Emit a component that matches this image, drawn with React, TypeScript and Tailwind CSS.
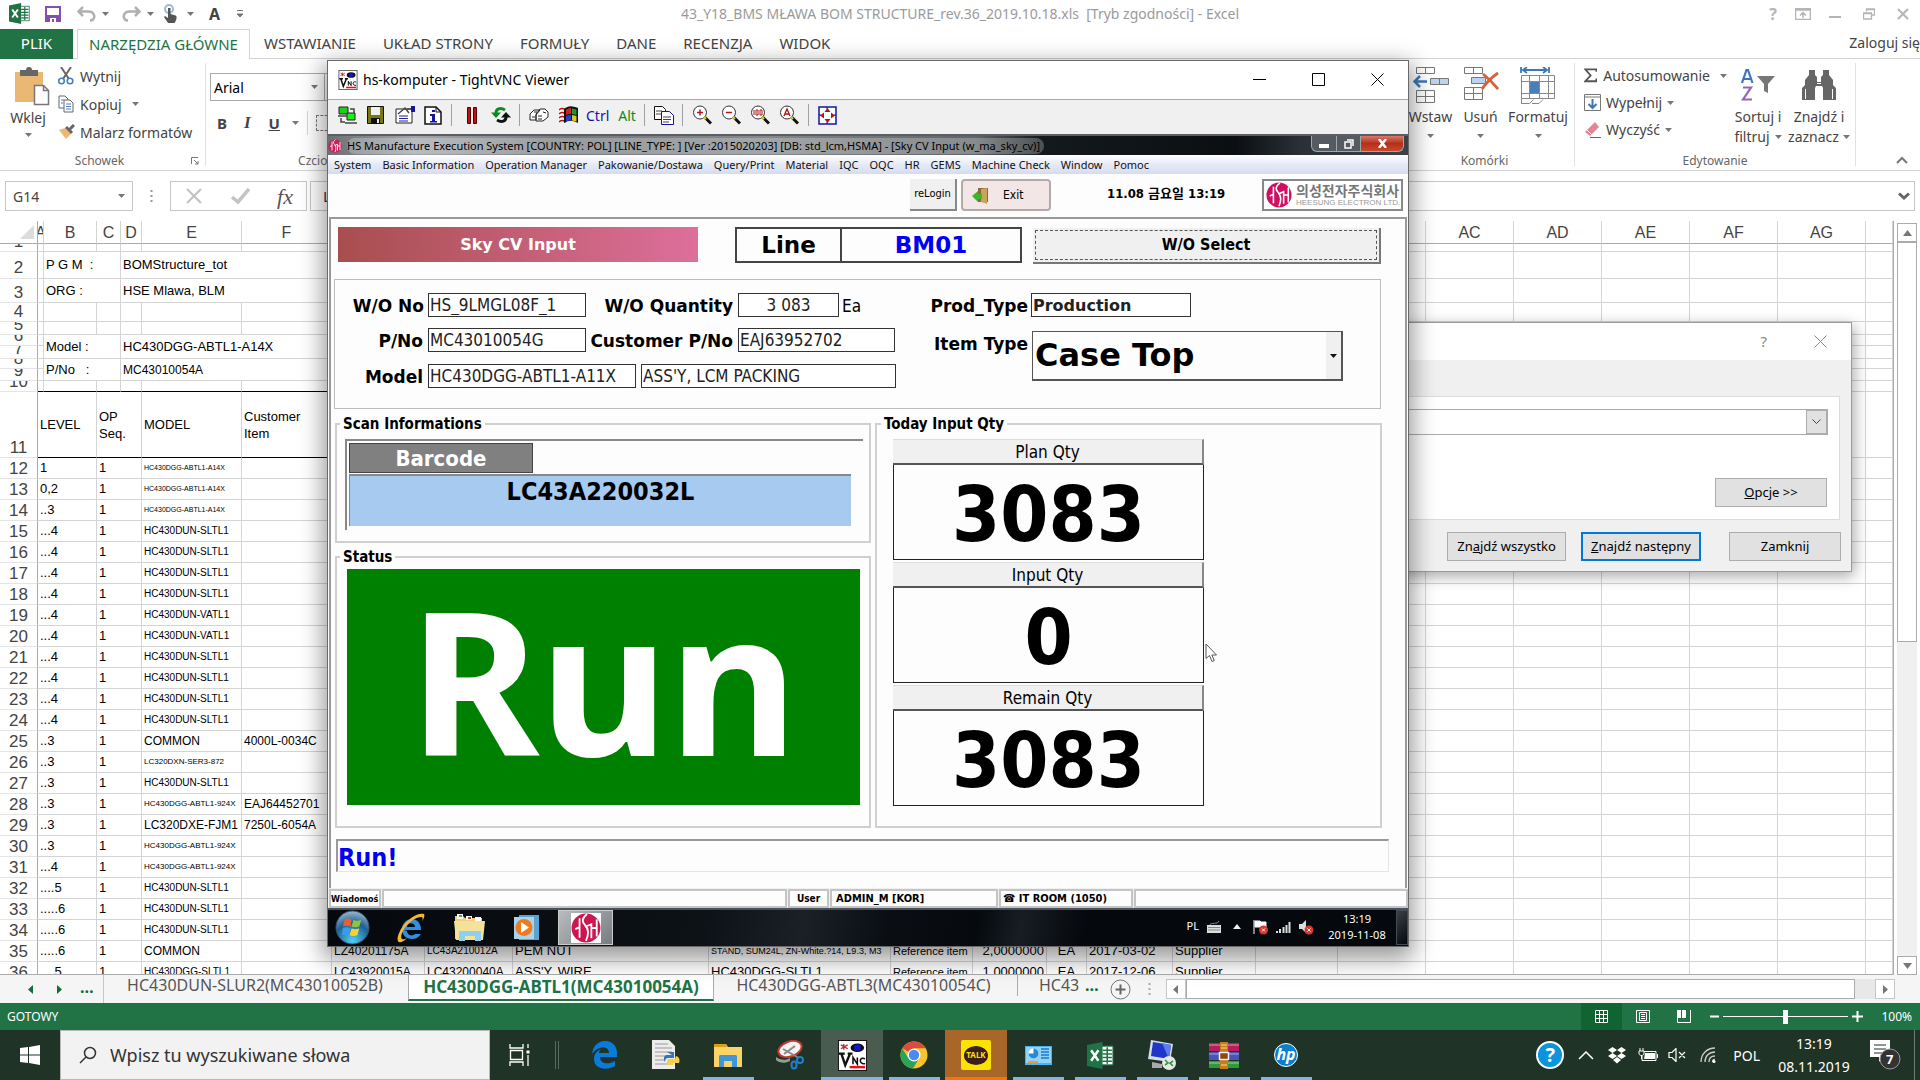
import React from "react";

const UI = "font-['Noto_Sans','Open_Sans',sans-serif]";
const TAHOMA = "font-['DejaVu_Sans_Condensed','DejaVu_Sans',sans-serif]";
const WIDE = "font-['DejaVu_Sans',sans-serif]";
const ARIAL = "font-['Liberation_Sans',Arial,sans-serif]";

/* ---------- small shared drawings ---------- */

function Caret({ className = "" }: { className?: string }) {
  return (
    <svg className={"shrink-0 " + className} width="7" height="4" viewBox="0 0 7 4">
      <path d="M0 0h7L3.5 4z" fill="#777" />
    </svg>
  );
}

function HsLogo({ size, color }: { size: number; color: string }) {
  return (
    <svg width={size} height={size} viewBox="0 0 28 28" className="shrink-0">
      <circle cx="14" cy="14" r="13.5" fill={color} />
      <path
        d="M8 5v18M4 15l4.500-2M15 1c-5 4-5 7-2 10s4 8 1 15M13 13l6-2.500v13M24 6v16M19 14h5"
        stroke="#fff"
        strokeWidth="1.7"
        fill="none"
      />
    </svg>
  );
}

function VncLogo({ size }: { size: number }) {
  return (
    <svg width={size} height={size} viewBox="0 0 30 32" className="shrink-0">
      <rect x=".5" y=".5" width="29" height="31" fill="#fff" stroke="#111" />
      <path d="M3 5l7 4M3 9l7-4M6 4v6" stroke="#b03030" strokeWidth="1.4" />
      <ellipse cx="20" cy="8" rx="7" ry="4.5" fill="#111" />
      <circle cx="20" cy="8" r="3.4" fill="#1414e0" />
      <path d="M1 14h6M3.500 14l4 12 5-12M10 14h5" stroke="#111" strokeWidth="2.4" fill="none" />
      <path d="M15.500 25v-7l4.500 7v-7M28 19.500c-5-3-7 4-2 5h2" stroke="#111" strokeWidth="1.600" fill="none" />
      <path d="M12 28h16" stroke="#f01010" strokeWidth="2.500" />
    </svg>
  );
}

/* ---------- Excel title, tabs, ribbon ---------- */

function ExcelMark({ size }: { size: number }) {
  return (
    <svg width={size} height={size} viewBox="0 0 26 26" className="shrink-0">
      <rect x="13" y="4" width="12" height="18" fill="#fff" stroke="#217346" />
      <path d="M15 8h9M15 11.500h9M15 15h9M15 18.500h9M19.500 5v16" stroke="#217346" strokeWidth="1.500" />
      <path d="M0 3l15-3v26L0 23z" fill="#217346" />
      <path d="M4 8l7 10M11 8L4 18" stroke="#fff" strokeWidth="2.400" />
    </svg>
  );
}

function TitleBar() {
  return (
    <header className="relative flex h-[29px] shrink-0 items-center pb-[2px] pl-[9px] pr-2">
      <ExcelMark size={21} />
      <svg className="ml-[15px]" width="16" height="16" viewBox="0 0 16 16">
        <path d="M1 1h14v14H1z" fill="#fff" stroke="#8450b0" strokeWidth="2" />
        <path d="M0 9h16v7H0z" fill="#8450b0" />
        <path d="M5 12h6v4H5z" fill="#fff" />
        <path d="M7 13h2v3H7z" fill="#8450b0" />
      </svg>
      <svg className="ml-4" width="19" height="16" viewBox="0 0 19 16">
        <path d="M6 1L1.500 5.500 6 10M2 5.500h9c8 0 8 9 2 9" fill="none" stroke="#b0b0b0" strokeWidth="2.500" />
      </svg>
      <Caret className="ml-[6px]" />
      <svg className="ml-[13px]" width="19" height="16" viewBox="0 0 19 16">
        <path d="M13 1l4.500 4.500L13 10M17 5.500H8c-8 0-8 9-2 9" fill="none" stroke="#b0b0b0" strokeWidth="2.500" />
      </svg>
      <Caret className="ml-[6px]" />
      <svg className="ml-[9px]" width="16" height="19" viewBox="0 0 16 19">
        <circle cx="6" cy="5" r="4" fill="none" stroke="#9db9d8" strokeWidth="2" />
        <path d="M5 4h2.500v6l5 1.500c2 .5 1 5-1 7.500H5l-4-6 1-1 3 2z" fill="#555" />
      </svg>
      <Caret className="ml-2" />
      <span className={"ml-[15px] text-[16px] font-bold text-[#444] " + UI}>A</span>
      <svg className="ml-[17px]" width="6" height="8" viewBox="0 0 6 8">
        <path d="M0 .5h6M0 4h6L3 7z" stroke="#777" fill="#777" />
      </svg>
      <h1 className="absolute left-1/2 -translate-x-1/2 whitespace-nowrap text-[14px] text-[#9a9a9a]">
        43_Y18_BMS MŁAWA BOM STRUCTURE_rev.36_2019.10.18.xls&nbsp; [Tryb zgodności] - Excel
      </h1>
      <div className="ml-auto flex items-center gap-[18px] pr-[3px] text-[#b5b5b5]">
        <span className="text-[16px] font-bold">?</span>
        <svg width="16" height="12" viewBox="0 0 16 12">
          <path d="M.5.500h15v11H.5zM0 2h16M8 10V5M5 7.500L8 4.500l3 3" fill="none" stroke="#b5b5b5" strokeWidth="1.500" />
        </svg>
        <svg width="12" height="12" viewBox="0 0 12 12"><path d="M0 9h12" stroke="#b5b5b5" strokeWidth="2" /></svg>
        <svg className="ml-1" width="12" height="12" viewBox="0 0 12 12">
          <path d="M3.500 3.500V1h8v6H9M.5 5h8v6H.5zM.5 5.500h8M3.500 1.500h8" fill="none" stroke="#b5b5b5" strokeWidth="1.300" />
        </svg>
        <svg className="ml-1" width="12" height="12" viewBox="0 0 12 12"><path d="M1 1l10 10M11 1L1 11" stroke="#b5b5b5" strokeWidth="2" /></svg>
      </div>
    </header>
  );
}

function RibbonTabs() {
  const tabs = ["WSTAWIANIE", "UKŁAD STRONY", "FORMUŁY", "DANE", "RECENZJA", "WIDOK"];
  return (
    <nav className="flex h-[30px] shrink-0 text-[15px] leading-[26px] text-[#444]">
      <button className="w-[73px] bg-[#217346] pb-[2px] text-white">PLIK</button>
      <div className="w-1 border-b border-[#d4d4d4]" />
      <button className="w-[173px] whitespace-nowrap border border-b-0 border-[#d4d4d4] pb-[2px] text-[#217346]">NARZĘDZIA GŁÓWNE</button>
      <div className="flex flex-1 gap-[27px] whitespace-nowrap border-b border-[#d4d4d4] pb-[2px] pl-[14px]">
        {tabs.map((t) => (
          <button key={t}>{t}</button>
        ))}
        <button className="ml-auto text-[14px]">Zaloguj się</button>
      </div>
    </nav>
  );
}

function Ribbon() {
  return (
    <section className="flex h-28 shrink-0 border-b border-[#d4d4d4] py-1 text-[14px] text-[#444]">
      <div className="flex w-[206px] shrink-0 flex-col border-r border-[#e1e1e1]">
        <div className="flex flex-1">
          <button className="flex w-[56px] flex-col items-center pt-1">
            <svg className="ml-2" width="36" height="39" viewBox="0 0 36 39">
              <path d="M1 5h28v30H1z" fill="#e9b973" />
              <path d="M6 3h6a3 3 0 0 1 6 0h6v6H6z" fill="#666" />
              <path d="M20.500 18.500h9l5 5v14h-14z" fill="#fff" stroke="#777" strokeWidth="1.500" />
              <path d="M29.500 18.500v5h5" fill="none" stroke="#777" strokeWidth="1.500" />
            </svg>
            <span className="mt-px leading-[22px]">Wklej</span>
            <Caret className="mt-1" />
          </button>
          <div className="-mt-px flex flex-col pl-[2px]">
            <button className="flex h-7 items-center gap-[6px]">
              <svg width="16" height="18" viewBox="0 0 16 18">
                <path d="M3 0l8 12M13 0L5 12" stroke="#666" strokeWidth="2" />
                <circle cx="3.500" cy="14" r="2.800" fill="#fff" stroke="#4a7ebb" strokeWidth="1.600" />
                <circle cx="12" cy="14" r="2.800" fill="#fff" stroke="#4a7ebb" strokeWidth="1.600" />
              </svg>
              Wytnij
            </button>
            <button className="flex h-7 items-center gap-[6px]">
              <svg width="16" height="18" viewBox="0 0 16 18">
                <path d="M1 1h6l3 3v9H1z" fill="#fff" stroke="#666" />
                <path d="M6 5h6l3 3v9H6z" fill="#fff" stroke="#666" />
                <path d="M8 9h5M8 11.500h5M8 14h5M3 5h3M3 8h2" stroke="#4a7ebb" />
              </svg>
              Kopiuj
              <Caret className="ml-1" />
            </button>
            <button className="flex h-7 items-center gap-[5px] whitespace-nowrap">
              <svg width="17" height="16" viewBox="0 0 17 16">
                <path d="M1 6l6-2 6 6-5 5z" fill="#e9b973" />
                <path d="M8 3l6 6M12 5l4-4" stroke="#666" strokeWidth="3" />
              </svg>
              Malarz formatów
            </button>
          </div>
        </div>
        <div className="mb-[-3px] flex h-4 items-center justify-center text-[12px] text-[#666]">
          <span className="ml-auto pl-2">Schowek</span>
          <svg className="ml-auto mr-[6px]" width="8" height="8" viewBox="0 0 8 8">
            <path d="M.5 7V.5H7M3 3l4 4M7 4v3H4" fill="none" stroke="#777" />
          </svg>
        </div>
      </div>
      <div className="flex w-[230px] shrink-0 flex-col pl-1 pt-[10px]">
        <div className="flex">
          <div className="flex h-7 w-[115px] items-center justify-between border border-[#ababab] px-[3px] text-[14px] text-black">
            Arial <Caret className="mr-[3px]" />
          </div>
          <div className="h-7 w-12 border border-l-0 border-[#ababab]" />
        </div>
        <div className="flex h-11 items-center pl-[7px] text-[15px]">
          <b>B</b>
          <i className="ml-[17px] font-['Liberation_Serif'] text-[17px] font-bold">I</i>
          <b className="ml-[18px] underline">U</b>
          <Caret className="ml-3" />
          <span className="ml-2 h-6 w-px bg-[#d4d4d4]" />
          <span className="ml-2 h-4 w-4 border border-dashed border-[#777]" />
        </div>
        <div className="-mb-[3px] mt-auto h-4 text-center text-[12px] leading-4 text-[#666]">Czcionka</div>
      </div>
      <div className="ml-auto flex w-[180px] shrink-0 flex-col border-r border-[#e1e1e1]">
        <div className="flex flex-1 pl-2">
          <button className="flex w-[55px] flex-col items-center pt-1">
            <svg width="36" height="36" viewBox="0 0 36 36">
              <path d="M3.500.500h18v6h-18zM12.500.500v6M3.500 23.500h18v12h-18zM12.500 23.500v12M3.500 29.500h18" fill="#fff" stroke="#777" />
              <path d="M17.500 11.500h18v6h-18zM26.500 11.500v6" fill="#bdd3ec" stroke="#777" />
              <path d="M14 14.500H3M7 9l-5.500 5.500L7 20" fill="none" stroke="#3c78b8" strokeWidth="2.500" />
            </svg>
            <span className="mt-[3px] leading-[22px]">Wstaw</span>
            <Caret className="mt-[6px]" />
          </button>
          <button className="flex w-[45px] flex-col items-center pt-1">
            <svg width="36" height="36" viewBox="0 0 36 36">
              <path d="M1.500.500h18v6h-18zM10.500.500v6M1.500 20.500h18v12h-18zM10.500 20.500v12M1.500 26.500h18" fill="#fff" stroke="#777" />
              <path d="M8.500 10.500h14v6h-14z" fill="#bdd3ec" stroke="#777" />
              <path d="M20 7c5 4 10 9 15 15M35 6C29 10 23 16 19 22" stroke="#d9603b" strokeWidth="2.800" fill="none" />
            </svg>
            <span className="mt-[3px] leading-[22px]">Usuń</span>
            <Caret className="mt-[6px]" />
          </button>
          <button className="flex w-[70px] flex-col items-center pt-1">
            <svg width="36" height="37" viewBox="0 0 36 37">
              <path d="M1 0v6M29 0v6M4 3h22M7 0L3 3l4 3M23 0l4 3-4 3" fill="none" stroke="#3c78b8" strokeWidth="1.800" />
              <path d="M1.500 8.500h33v23h-33zM1.500 14.500h33M1.500 26.500h33M9.500 8.500v23M19.500 8.500v23M28.500 8.500v23" fill="#fff" stroke="#888" />
              <path d="M10 15h9v11h-9z" fill="#4a7ebb" />
              <path d="M1.500 31.500v5h8l4-4M12 36.500h7l4-4" fill="none" stroke="#888" />
            </svg>
            <span className="mt-[2px] leading-[22px]">Formatuj</span>
            <Caret className="mt-[6px]" />
          </button>
        </div>
        <div className="-mb-[3px] h-4 text-center text-[12px] leading-4 text-[#666]">Komórki</div>
      </div>
      <div className="flex w-[281px] shrink-0 flex-col border-r border-[#e1e1e1]">
        <div className="flex flex-1">
          <div className="-mt-px flex w-[152px] flex-col pl-[9px] text-[14px]">
            <button className="flex h-[27px] items-center gap-[6px]">
              <svg width="16" height="17" viewBox="0 0 16 17">
                <path d="M15 4V1H1.500L8 8.500 1.500 15.500H15V12" fill="none" stroke="#555" strokeWidth="2.200" />
              </svg>
              Autosumowanie <Caret className="ml-1" />
            </button>
            <button className="flex h-[27px] items-center gap-[5px]">
              <svg width="17" height="17" viewBox="0 0 17 17">
                <path d="M.5.500h16v16H.5zM.5 3h16" fill="#fff" stroke="#777" />
                <path d="M8.500 5v9M4.500 10l4 4 4-4" fill="none" stroke="#3c78b8" strokeWidth="2" />
              </svg>
              Wypełnij <Caret />
            </button>
            <button className="flex h-[27px] items-center gap-[5px]">
              <svg width="17" height="17" viewBox="0 0 17 17">
                <path d="M1 11L11 1l4 5L6 15z" fill="#e58696" />
                <path d="M3 9l5 5" stroke="#fff" />
                <path d="M6 16.500h11" stroke="#666" />
              </svg>
              Wyczyść <Caret />
            </button>
          </div>
          <button className="flex w-[62px] flex-col items-center pt-[6px] leading-5">
            <svg width="34" height="32" viewBox="0 0 34 32">
              <path d="M1 14L5.500 1h1.500L11.500 14M3 10h7" fill="none" stroke="#3c78b8" strokeWidth="2.200" />
              <path d="M2 18.500h8L2 30.500h9" fill="none" stroke="#9364b5" strokeWidth="2.200" />
              <path d="M16 7h18l-7 8v9l-4-2v-7z" fill="#777" />
            </svg>
            <span className="mt-[6px] whitespace-nowrap">Sortuj i</span>
            <span className="flex items-center gap-[5px]">filtruj <Caret /></span>
          </button>
          <button className="flex w-[60px] flex-col items-center pt-[6px] leading-5">
            <svg width="34" height="32" viewBox="0 0 34 32">
              <path d="M0 31V19l3-3V11l4-5V1h6v5l2 2v5h4V8l2-2V1h6v5l4 5v5l3 3v12H21V19l-1-2h-6l-1 2v12z" fill="#666" />
              <path d="M3.500 20v10M30.500 20v10M15 14.500h4" stroke="#fff" />
            </svg>
            <span className="mt-[6px] whitespace-nowrap">Znajdź i</span>
            <span className="flex items-center gap-1">zaznacz <Caret /></span>
          </button>
        </div>
        <div className="-mb-[3px] h-4 text-center text-[12px] leading-4 text-[#666]">Edytowanie</div>
      </div>
      <div className="flex w-[64px] shrink-0 items-end justify-end pb-[2px] pr-3">
        <svg width="12" height="8" viewBox="0 0 12 8"><path d="M1 7l5-5 5 5" fill="none" stroke="#777" strokeWidth="2" /></svg>
      </div>
    </section>
  );
}

function FormulaBar() {
  return (
    <section className="flex h-[50px] shrink-0 items-start pl-[5px] pr-[5px] pt-[10px] text-[15px]">
      <div className="flex h-[30px] w-[128px] items-center justify-between border border-[#c6c6c6] px-[7px] text-[14px] text-[#444]">
        G14 <Caret />
      </div>
      <div className="flex h-[30px] w-[37px] items-center justify-center text-[#999]">
        <svg width="3" height="12" viewBox="0 0 3 12"><path d="M1.500 0v2M1.500 5v2M1.500 10v2" stroke="#999" strokeWidth="2" /></svg>
      </div>
      <div className="flex h-[30px] w-[137px] items-center justify-between border border-[#c6c6c6] pl-[14px] pr-[13px]">
        <svg width="18" height="16" viewBox="0 0 18 16"><path d="M2 1l14 14M16 1L2 15" stroke="#c4c4c4" strokeWidth="2.200" /></svg>
        <svg width="19" height="16" viewBox="0 0 19 16"><path d="M1 9l6 5L18 1" fill="none" stroke="#c4c4c4" strokeWidth="3.500" /></svg>
        <span className="font-['Liberation_Serif'] text-[22px] italic text-[#555]">fx</span>
      </div>
      <div className="ml-[3px] flex h-[30px] flex-1 items-center border border-[#c6c6c6] px-3">
        <input aria-label="Formula" className="min-w-0 flex-1 text-[#335]" defaultValue="L" />
        <svg className="-mr-2" width="12" height="8" viewBox="0 0 12 8"><path d="M1 1.500l5 4.500 5-4.500" fill="none" stroke="#666" strokeWidth="3" /></svg>
      </div>
    </section>
  );
}

/* ---------- worksheet ---------- */

const cellBase = "border-b border-r border-[#d4d4d4] p-0";
const filler = (n: number, black = false) =>
  Array.from({ length: n }, (_, i) => (
    <td key={"f" + i} className={black ? "border-b border-r border-b-black border-r-[#d4d4d4] p-0" : cellBase} />
  ));

function RowHead({ n, h }: { n: number; h: string }) {
  return (
    <th scope="row" className="border-b border-r border-b-[#e4e4e4] border-r-[#ababab] p-0 font-normal">
      <div className={"flex items-end justify-center overflow-hidden text-[17px] leading-[19px] text-[#444] " + h}>{n}</div>
    </th>
  );
}

function Txt({ children, size = "text-[13px]" }: { children: React.ReactNode; size?: string }) {
  return <div className={"overflow-hidden whitespace-pre pl-[2px] leading-4 " + size}>{children}</div>;
}

const S = "text-[7px]";
const M = "text-[10px]";
const L = "text-[12px]";
const bomRows: [string, string, string, string][] = [
  ["1", "HC430DGG-ABTL1-A14X", S, ""],
  ["0,2", "HC430DGG-ABTL1-A14X", S, ""],
  ["..3", "HC430DGG-ABTL1-A14X", S, ""],
  ["...4", "HC430DUN-SLTL1", M, ""],
  ["...4", "HC430DUN-SLTL1", M, ""],
  ["...4", "HC430DUN-SLTL1", M, ""],
  ["...4", "HC430DUN-SLTL1", M, ""],
  ["...4", "HC430DUN-VATL1", M, ""],
  ["...4", "HC430DUN-VATL1", M, ""],
  ["...4", "HC430DUN-SLTL1", M, ""],
  ["...4", "HC430DUN-SLTL1", M, ""],
  ["...4", "HC430DUN-SLTL1", M, ""],
  ["...4", "HC430DUN-SLTL1", M, ""],
  ["..3", "COMMON", L, "4000L-0034C"],
  ["..3", "LC320DXN-SER3-872", "text-[8px]", ""],
  ["..3", "HC430DUN-SLTL1", M, ""],
  ["..3", "HC430DGG-ABTL1-924X", "text-[8px]", "EAJ64452701"],
  ["..3", "LC320DXE-FJM1", L, "7250L-6054A"],
  ["..3", "HC430DGG-ABTL1-924X", "text-[8px]", ""],
  ["...4", "HC430DGG-ABTL1-924X", "text-[8px]", ""],
  ["....5", "HC430DUN-SLTL1", M, ""],
  [".....6", "HC430DUN-SLTL1", M, ""],
  [".....6", "HC430DUN-SLTL1", M, ""],
  [".....6", "COMMON", L, ""],
  ["....5", "HC430DGG-SLTL1", M, ""],
];

const partRows: Record<number, string[]> = {
  35: ["LZ40201175A", "LC43A210012A", "PEM NUT", "STAND, SUM24L, ZN-White.?14, L9.3, M3", "Reference item", "2,0000000", "EA", "2017-03-02", "Supplier"],
  36: ["LC43920015A", "LC43200040A", "ASS'Y, WIRE", "HC430DGG-SLTL1", "Reference item", "1,0000000", "EA", "2017-12-06", "Supplier"],
};

const columns: [string, string][] = [
  ["A", "w-[6px]"], ["B", "w-[53px]"], ["C", "w-[24px]"], ["D", "w-[21px]"], ["E", "w-[100px]"], ["F", "w-[90px]"],
  ["G", "w-[93px]"], ["H", "w-[88px]"], ["I", "w-[196px]"], ["J", "w-[182px]"], ["K", "w-[82px]"], ["L", "w-[74px]"],
  ["M", "w-[40px]"], ["N", "w-[86px]"], ["O", "w-[83px]"], ["P", "w-[82px]"], ["AB", "w-[88px]"], ["AC", "w-[88px]"],
  ["AD", "w-[88px]"], ["AE", "w-[88px]"], ["AF", "w-[88px]"], ["AG", "w-[88px]"], ["", ""],
];

function Sheet() {
  return (
    <table className={"w-full table-fixed border-separate border-spacing-0 text-left text-black " + ARIAL}>
      <colgroup>
        <col className="w-[38px]" />
        {columns.map(([n, w]) => (
          <col key={n} className={w} />
        ))}
      </colgroup>
      <thead>
        <tr className="h-[23px]">
          <th className="border-b border-r border-[#ababab] p-0">
            <svg className="ml-5" width="14" height="14" viewBox="0 0 14 14"><path d="M14 0v14H0z" fill="#dcdcdc" /></svg>
          </th>
          {columns.map(([n]) => (
            <th key={n} scope="col" className="border-b border-r border-b-[#ababab] border-r-[#d4d4d4] p-0 text-center font-normal text-[#444]">
              <div className="flex justify-center overflow-hidden pt-[2px] text-[16px] leading-5">{n}</div>
            </th>
          ))}
        </tr>
      </thead>
      <tbody>
        <tr className="h-2"><RowHead n={1} h="h-[7px]" />{filler(23)}</tr>
        <tr className="h-[27px]">
          <RowHead n={2} h="h-[23px]" />
          {filler(1)}
          <td className={cellBase} colSpan={2}><Txt>{"P G M  :"}</Txt></td>
          <td className={cellBase} colSpan={5}><Txt>BOMStructure_tot</Txt></td>
          {filler(15)}
        </tr>
        <tr className="h-6">
          <RowHead n={3} h="h-[22px]" />
          {filler(1)}
          <td className={cellBase} colSpan={2}><Txt>ORG :</Txt></td>
          <td className={cellBase} colSpan={5}><Txt>HSE Mlawa, BLM</Txt></td>
          {filler(15)}
        </tr>
        <tr className="h-[19px]"><RowHead n={4} h="h-[18px]" />{filler(23)}</tr>
        <tr className="h-[13px]"><RowHead n={5} h="h-3" />{filler(23)}</tr>
        <tr className="h-[11px]">
          <RowHead n={6} h="h-[10px]" />
          {filler(1)}
          <td className={cellBase} colSpan={2} rowSpan={2}><Txt>Model :</Txt></td>
          <td className={cellBase} colSpan={5} rowSpan={2}><Txt>HC430DGG-ABTL1-A14X</Txt></td>
          {filler(15)}
        </tr>
        <tr className="h-[13px]"><RowHead n={7} h="h-3" />{filler(16)}</tr>
        <tr className="h-[10px]">
          <RowHead n={8} h="h-[9px]" />
          {filler(1)}
          <td className={cellBase} colSpan={2} rowSpan={2}><Txt>{"P/No   :"}</Txt></td>
          <td className={cellBase} colSpan={5} rowSpan={2}><Txt size="text-[12px]">MC43010054A</Txt></td>
          {filler(15)}
        </tr>
        <tr className="h-3"><RowHead n={9} h="h-[11px]" />{filler(16)}</tr>
        <tr className="h-[11px]">
          <RowHead n={10} h="h-[10px]" />
          {filler(16, true)}
          {filler(7)}
        </tr>
        <tr className="h-[66px]">
          <RowHead n={11} h="h-[65px]" />
          <td className="border-b border-r border-b-black border-r-[#d4d4d4] p-0" colSpan={2}><div className="pl-[2px] text-[13px]">LEVEL</div></td>
          <td className="border-b border-r border-b-black border-r-[#d4d4d4] p-0 pl-[2px] text-[13px] leading-[17px]" colSpan={2}>OP<br />Seq.</td>
          <td className="border-b border-r border-b-black border-r-[#d4d4d4] p-0 pl-[2px] text-[13px]">MODEL</td>
          <td className="border-b border-r border-b-black border-r-[#d4d4d4] p-0 pl-[2px] text-[13px] leading-[17px]">Customer<br />Item</td>
          {filler(10, true)}
          {filler(7)}
        </tr>
        {bomRows.map(([lvl, model, size, item], i) => {
          const parts = partRows[i + 12];
          return (
            <tr key={i} className="h-[21px]">
              <RowHead n={i + 12} h="h-5" />
              <td className={cellBase} colSpan={2}><div className="pl-[2px] text-[13px] leading-4">{lvl}</div></td>
              <td className={cellBase} colSpan={2}><Txt>1</Txt></td>
              <td className={cellBase}><div className={"overflow-hidden whitespace-nowrap pl-[2px] leading-4 " + size}>{model}</div></td>
              <td className={cellBase}><div className="pl-[2px] text-[12px] leading-4">{item}</div></td>
              {parts
                ? parts.map((p, j) => (
                    <td key={j} className={cellBase}>
                      <div
                        className={
                          "overflow-hidden whitespace-nowrap px-[2px] leading-4 " +
                          (j === 5 ? "text-right " : j === 6 ? "text-center " : "") +
                          (j === 3 && i === 23 ? "text-[9px]" : j === 1 && i === 23 ? "text-[10px]" : j === 4 ? "text-[11px]" : j < 2 ? "text-[12px]" : "text-[13px]")
                        }
                      >
                        {p}
                      </div>
                    </td>
                  ))
                : filler(9)}
              {filler(8)}
            </tr>
          );
        })}
      </tbody>
    </table>
  );
}

function SheetArea() {
  return (
    <section className="flex min-h-0 flex-1">
      <div className="min-w-0 flex-1 overflow-hidden border-b border-r border-[#ababab]">
        <Sheet />
      </div>
      <div className="flex w-[26px] shrink-0 flex-col bg-white pl-[3px] pr-[3px] pt-[2px]">
        <button aria-label="Scroll up" className="flex h-[19px] items-center justify-center border border-[#ababab]">
          <svg width="9" height="6" viewBox="0 0 9 6"><path d="M0 6h9L4.500 0z" fill="#777" /></svg>
        </button>
        <div className="flex-1 bg-[#f0f0f0]">
          <div className="h-[56%] border border-[#ababab] bg-white" />
        </div>
        <button aria-label="Scroll down" className="flex h-[19px] items-center justify-center border border-[#ababab]">
          <svg width="9" height="6" viewBox="0 0 9 6"><path d="M0 0h9L4.500 6z" fill="#777" /></svg>
        </button>
      </div>
    </section>
  );
}

function SheetTabs() {
  return (
    <section className="flex h-7 shrink-0 items-start whitespace-nowrap bg-[#f5f5f5] text-[16px] leading-[21px] text-[#555]">
      <div className="flex h-7 w-[104px] items-center border-r border-[#c6c6c6] pl-7">
        <svg width="5" height="9" viewBox="0 0 5 9"><path d="M5 0v9L0 4.500z" fill="#0f6e3c" /></svg>
        <svg className="ml-6" width="5" height="9" viewBox="0 0 5 9"><path d="M0 0v9l5-4.500z" fill="#0f6e3c" /></svg>
        <span className="mb-1 ml-[18px] font-bold text-[#0f6e3c]">…</span>
      </div>
      <button className="w-[304px] pr-[2px] text-center">HC430DUN-SLUR2(MC43010052B)</button>
      <button className="h-[26px] w-[306px] border-x border-b-2 border-x-[#ababab] border-b-[#217346] bg-white pb-[2px] text-center text-[17px] font-bold text-[#217346]">
        HC430DGG-ABTL1(MC43010054A)
      </button>
      <button className="w-[304px] border-r border-[#ababab] pr-1 text-center">HC430DGG-ABTL3(MC43010054C)</button>
      <button className="ml-[21px] w-[42px] overflow-hidden text-left">HC43</button>
      <b className="ml-1 text-[#0f6e3c]">…</b>
      <svg className="ml-[11px] mt-1 shrink-0" width="21" height="21" viewBox="0 0 21 21">
        <circle cx="10.500" cy="10.500" r="9.500" fill="none" stroke="#777" />
        <path d="M5.500 10.500h10M10.500 5.500v10" stroke="#666" strokeWidth="2" />
      </svg>
      <svg className="ml-[17px] mt-2" width="3" height="12" viewBox="0 0 3 12"><path d="M1.500 0v2M1.500 5v2M1.500 10v2" stroke="#aaa" strokeWidth="2" /></svg>
      <div className="ml-[15px] mr-[25px] mt-1 flex h-5 flex-1 bg-[#e8e8e8]">
        <button aria-label="Scroll left" className="flex w-5 items-center justify-center border border-[#c6c6c6] bg-white">
          <svg width="5" height="9" viewBox="0 0 5 9"><path d="M5 0v9L0 4.500z" fill="#777" /></svg>
        </button>
        <div className="flex-1 border border-[#ababab] bg-white" />
        <div className="w-5" />
        <button aria-label="Scroll right" className="flex w-5 items-center justify-center border border-[#c6c6c6] bg-white">
          <svg width="5" height="9" viewBox="0 0 5 9"><path d="M0 0v9l5-4.500z" fill="#777" /></svg>
        </button>
      </div>
    </section>
  );
}

function StatusBar() {
  return (
    <section className="flex h-[27px] shrink-0 items-center bg-[#217346] pl-[7px] pr-2 text-[12px] text-white">
      <span>GOTOWY</span>
      <button aria-label="Normal view" className="ml-auto flex h-[27px] w-[41px] items-center justify-center bg-[#0f6432]">
        <svg width="13" height="13" viewBox="0 0 13 13"><path d="M.5.500h12v12H.5zM.5 4.500h12M.5 8.500h12M4.500.500v12M8.500.500v12" fill="none" stroke="#fff" /></svg>
      </button>
      <button aria-label="Page layout" className="flex w-[41px] justify-center">
        <svg width="14" height="13" viewBox="0 0 14 13"><path d="M.5.500h13v12H.5zM3.500 2.500h7v8h-7zM5 4.500h4M5 6.500h4M5 8.500h4" fill="none" stroke="#fff" /></svg>
      </button>
      <button aria-label="Page breaks" className="flex w-[41px] justify-center">
        <svg width="14" height="13" viewBox="0 0 14 13"><path d="M.5 0v12.500h13V0" fill="none" stroke="#fff" /><path d="M0 0h4v8H0zM5 0h4v8H5z" fill="#fff" /></svg>
      </button>
      <svg className="ml-[6px]" width="9" height="3" viewBox="0 0 9 3"><path d="M0 1.500h9" stroke="#fff" strokeWidth="2" /></svg>
      <input
        type="range"
        aria-label="Zoom"
        defaultValue={50}
        className="mx-1 h-4 w-[125px] appearance-none bg-[linear-gradient(white,white)] bg-[length:100%_1px] bg-center bg-no-repeat [&::-webkit-slider-thumb]:h-[14px] [&::-webkit-slider-thumb]:w-[5px] [&::-webkit-slider-thumb]:appearance-none [&::-webkit-slider-thumb]:bg-white"
      />
      <svg width="11" height="11" viewBox="0 0 11 11"><path d="M0 5.500h11M5.500 0v11" stroke="#fff" strokeWidth="2" /></svg>
      <span className="ml-[18px]">100%</span>
    </section>
  );
}

/* ---------- Windows 10 taskbar ---------- */

const appIcons: { name: string; state: string; icon: React.ReactNode }[] = [
  {
    name: "Edge", state: "",
    icon: <svg width="26" height="28" viewBox="0 0 26 28"><path d="M1 13C2 5 7 0 14 0c8 0 12 6 12 12v4H9c0 7 9 8 15 4v5c-9 5-21 3-21-7 0-5 3-8 7-10-2 2-2 3-2 4h10c0-8-12-7-17 1z" fill="#0b7bd9" /></svg>,
  },
  {
    name: "Python", state: "",
    icon: (
      <svg width="28" height="30" viewBox="0 0 28 30">
        <path d="M0 0h17l6 6v23H0z" fill="#ececec" />
        <path d="M3 4h13M3 8h17M3 12h17M3 16h10M3 20h9M3 24h12" stroke="#999" />
        <path d="M15 12h7v6h-6c-2 0-3 2-3 4-2-3-1-6 1-7h6z" fill="#3a74a8" />
        <path d="M24 16c4 1 4 5 3 7h-6v2h-6v-4c0-2 2-2 4-2h4z" fill="#f7cf45" />
      </svg>
    ),
  },
  {
    name: "Explorer", state: "run",
    icon: (
      <svg width="28" height="25" viewBox="0 0 28 25">
        <path d="M0 1h12l2 3h14v20H0z" fill="#f9d368" />
        <path d="M0 1h12l1 3H0z" fill="#d9a017" />
        <path d="M5 24V14c0-2 1-2 2-2h14c1 0 2 0 2 2v10h-5v-6h-8v6z" fill="#3f96d8" />
      </svg>
    ),
  },
  {
    name: "Snipping Tool", state: "",
    icon: (
      <svg width="28" height="30" viewBox="0 0 28 30">
        <ellipse cx="14" cy="9" rx="12" ry="7.500" fill="#f4f4f4" stroke="#c23a2f" strokeWidth="2" transform="rotate(-20 14 9)" />
        <path d="M8 14L19 6M7 9l16 9" stroke="#888" strokeWidth="2" />
        <path d="M0 17c4 3 10 4 14 1v3c-5 3-11 2-14-1z" fill="#999" />
        <circle cx="24" cy="20" r="3" fill="none" stroke="#1e80cc" strokeWidth="2" />
        <ellipse cx="18" cy="25" rx="2.500" ry="3.500" fill="none" stroke="#1e80cc" strokeWidth="2" />
      </svg>
    ),
  },
  { name: "VNC", state: "active", icon: <VncLogo size={31} /> },
  {
    name: "Chrome", state: "run",
    icon: (
      <svg width="28" height="28" viewBox="0 0 28 28">
        <circle cx="14" cy="14" r="13.500" fill="#f7c52d" />
        <path d="M14 14L2.300 7.300A13.500 13.500 0 0 1 25.700 7.300H14z" fill="#dd4b3e" />
        <path d="M14 14l-5.500 3.500L2.300 7.300A13.500 13.500 0 0 0 13 27.500l6-10z" fill="#2aa457" />
        <circle cx="14" cy="14" r="6.500" fill="#fff" />
        <circle cx="14" cy="14" r="5.200" fill="#4a8af4" />
      </svg>
    ),
  },
  {
    name: "KakaoTalk", state: "alert",
    icon: (
      <span className="flex h-[30px] w-[30px] items-center justify-center rounded-[2px] bg-[#fbe300]">
        <span className="flex h-[19px] w-[24px] items-center justify-center rounded-[50%] bg-[#3b1e1e] text-[8px] font-bold text-[#fbe300]">TALK</span>
      </span>
    ),
  },
  {
    name: "Presentation", state: "run",
    icon: (
      <svg width="27" height="19" viewBox="0 0 27 19">
        <path d="M0 0h27v19H0z" fill="#4db3ee" />
        <path d="M1 1h25v16H1z" fill="#8fd3fb" />
        <circle cx="8.500" cy="7.500" r="5" fill="#fff" />
        <path d="M8.500 7.500v-5a5 5 0 1 1-5 5z" fill="#2c86d6" />
        <path d="M16 3h8M16 6h8M16 9h8M16 12h8" stroke="#1f78c8" strokeWidth="1.500" />
        <path d="M3 16h10" stroke="#f2a01e" strokeWidth="2" />
      </svg>
    ),
  },
  { name: "Excel", state: "run", icon: <ExcelMark size={27} /> },
  {
    name: "Remote Desktop", state: "run",
    icon: (
      <svg width="28" height="31" viewBox="0 0 28 31">
        <path d="M3 0l22 4-3 18L0 19z" fill="#d8dde8" />
        <path d="M5 2l18 3-2 14L3 16z" fill="#2036c8" />
        <path d="M14 3l9 2-2 14z" fill="#5f7df0" />
        <path d="M4 22l10 2v4H4z" fill="#aaa" />
        <circle cx="21" cy="23" r="7" fill="#e8e8e8" />
        <path d="M17 25l3-2-3-3M25 21l-3 2 3 3" stroke="#2c9a3b" strokeWidth="1.600" fill="none" />
      </svg>
    ),
  },
  {
    name: "WinRAR", state: "run",
    icon: (
      <svg width="30" height="27" viewBox="0 0 30 27">
        <path d="M0 1h30v8H0z" fill="#b5205a" /><path d="M0 10h30v8H0z" fill="#4b52b8" /><path d="M0 19h30v7H0z" fill="#2e9a3a" />
        <path d="M0 3h30M0 12h30M0 21h30" stroke="#fff" strokeOpacity=".35" strokeWidth="1.500" />
        <path d="M11 0h8v27h-8z" fill="#c77a1e" />
        <path d="M12 3h6M12 6h6M12 23h6" stroke="#f7dd80" />
        <rect x="10.500" y="10.500" width="9" height="7" fill="#8a4a10" stroke="#eee" strokeWidth="1.500" />
      </svg>
    ),
  },
  {
    name: "HP", state: "run",
    icon: (
      <span className="flex h-6 w-6 items-center justify-center rounded-full border border-white bg-[#0a7fcd] pb-[2px] text-[16px] font-bold italic leading-none text-white">hp</span>
    ),
  },
];

const cellState: Record<string, string> = {
  "": "bg-transparent",
  run: "bg-transparent",
  active: "bg-[#4a5b50]",
  alert: "bg-[#a86728]",
};
const barState: Record<string, string> = {
  "": "w-0",
  run: "w-[51px] bg-[#76b9ed]",
  active: "w-full bg-[#76b9ed]",
  alert: "w-full bg-[#ff7200]",
};

function Taskbar() {
  return (
    <footer className="flex h-[50px] shrink-0 items-center bg-[#1f3327] text-white">
      <button aria-label="Start" className="flex h-full w-[60px] items-center justify-center">
        <svg width="20" height="20" viewBox="0 0 20 20"><path d="M0 3l8-1v7.500H0zM9 2l11-2v9.500H9zM0 10.500h8V18l-8-1zM9 10.500h11V20L9 18z" fill="#fff" /></svg>
      </button>
      <label className="flex h-full w-[430px] items-center border border-[#b8b8b8] bg-[#f2f2f2] pl-[18px] text-[#333]">
        <svg width="18" height="18" viewBox="0 0 18 18"><circle cx="11" cy="7" r="5.500" fill="none" stroke="#333" strokeWidth="1.500" /><path d="M7 11l-6 6" stroke="#333" strokeWidth="1.500" /></svg>
        <input className="ml-[13px] w-80 text-[18px] placeholder:text-[#333]" placeholder="Wpisz tu wyszukiwane słowa" />
      </label>
      <div className="flex w-[83px] items-center pl-[19px]">
        <svg width="22" height="22" viewBox="0 0 22 22">
          <path d="M1 0v4h13V0M1 22v-4h13v4M1.500 6.500h12v9h-12zM19 0v4M19 11v11" fill="none" stroke="#fff" strokeWidth="1.300" />
          <path d="M17.500 6.500h3v3h-3z" fill="#fff" />
        </svg>
        <span className="ml-6 h-7 w-1 border-x border-[#5a6a60]" />
      </div>
      {appIcons.map(({ name, state, icon }) => (
        <button key={name} aria-label={name} className={"flex h-full w-[62px] shrink-0 flex-col items-center " + cellState[state]}>
          <span className="flex flex-1 items-center">{icon}</span>
          <span className={"-mt-[3px] h-[3px] " + barState[state]} />
        </button>
      ))}
      <div className="ml-auto flex h-full items-center text-[14px]">
        <span className="flex h-7 w-7 items-center justify-center rounded-full border-2 border-white bg-[#0a94dc] text-[20px] font-bold">?</span>
        <svg className="ml-[14px]" width="16" height="9" viewBox="0 0 16 9"><path d="M1 8l7-7 7 7" fill="none" stroke="#fff" strokeWidth="1.500" /></svg>
        <svg className="ml-[14px]" width="18" height="17" viewBox="0 0 18 17"><path d="M4.500 0L9 3 4.500 6 0 3zM13.500 0L18 3l-4.500 3L9 3zM4.500 6L9 9l-4.500 3L0 9zM13.500 6L18 9l-4.500 3L9 9zM9 10l4 3-4 3.500L5 13z" fill="#fff" /></svg>
        <svg className="ml-3" width="20" height="14" viewBox="0 0 20 14"><path d="M6 3.500h12v9H4V8M19.500 6v4M1 3h5v3c-1 2-4 2-5 0zM2 0v3M5 0v3M3.500 7v4" fill="none" stroke="#fff" /><path d="M7 5h10v6H6z" fill="#fff" /></svg>
        <svg className="ml-[10px]" width="18" height="14" viewBox="0 0 18 14"><path d="M1 4.500h3l4-4v13l-4-4H1zM11 4l6 6M17 4l-6 6" fill="none" stroke="#fff" strokeWidth="1.200" /></svg>
        <svg className="ml-[14px]" width="17" height="16" viewBox="0 0 17 16"><path d="M1 15C1 7 7 1 15 1M5 15c0-6 4-10 10-10M9 15c0-4 2-6 6-6M12.500 15c0-2 1-2.500 2.500-2.500" fill="none" stroke="#ccc" strokeWidth="1.300" /><circle cx="14" cy="14.500" r="1.500" fill="#fff" /></svg>
        <span className="ml-4">POL</span>
        <div className="ml-[18px] w-[72px] text-center leading-[23px]">13:19<br />08.11.2019</div>
        <div className="relative ml-[20px]">
          <svg width="32" height="32" viewBox="0 0 32 32">
            <path d="M0 1h20v17h-7l-4 5v-5H0z" fill="#fff" />
            <path d="M4 6h12M4 10h12M4 14h8" stroke="#1f3327" strokeWidth="1.200" />
            <circle cx="20" cy="20" r="10" fill="#333" stroke="#999" />
          </svg>
          <b className="absolute left-4 top-[11px] text-[13px] leading-[18px]">7</b>
        </div>
        <span className="ml-3 h-full w-[6px] border-l border-[#6d7c73]" />
      </div>
    </footer>
  );
}

/* ---------- Find dialog ---------- */

function FindDialog() {
  const btn = "h-[29px] border border-[#adadad] bg-[#e1e1e1]";
  return (
    <div className="absolute left-[1250px] top-[322px] flex w-[602px] flex-col border border-[#9b9b9b] bg-[#f0f0f0] text-[13px] text-black shadow-[2px_4px_14px_rgba(0,0,0,0.35)]">
      <div className="flex h-[37px] items-center justify-end gap-[47px] bg-white pr-6 text-[#888]">
        <span className="text-[15px]">?</span>
        <svg width="13" height="13" viewBox="0 0 13 13"><path d="M.5.500l12 12M12.500.500l-12 12" stroke="#888" /></svg>
      </div>
      <div className="mr-[11px] mt-9 flex h-[124px] flex-col items-end border border-[#dcdcdc] bg-white pr-[11px] pt-3">
        <div className="flex h-[26px] w-full border border-[#ababab]">
          <input aria-label="Find what" className="min-w-0 flex-1" />
          <button aria-label="Show history" className="flex w-[21px] items-center justify-center border border-[#adadad] bg-[#e1e1e1]">
            <svg width="9" height="6" viewBox="0 0 9 6"><path d="M.5.500l4 4 4-4" fill="none" stroke="#444" /></svg>
          </button>
        </div>
        <button className={"mr-px mt-[43px] w-28 " + btn}><u>O</u>pcje &gt;&gt;</button>
      </div>
      <div className="mb-[10px] mr-[10px] mt-3 flex justify-end">
        <button className={"w-[119px] " + btn}>Zn<u>a</u>jdź wszystko</button>
        <button className="ml-[15px] h-[29px] w-[120px] border-2 border-[#0078d7] bg-[#e1e1e1]"><u>Z</u>najdź następny</button>
        <button className={"ml-7 w-28 " + btn}>Zamknij</button>
      </div>
    </div>
  );
}

/* ---------- TightVNC window ---------- */

function VncToolbar() {
  const sep = <span className="mx-2 h-[22px] w-px bg-[#a0a0a0]" />;
  const lens = (inner: React.ReactNode) => (
    <svg className="mr-[9px]" width="20" height="20" viewBox="0 0 20 20">
      <circle cx="8" cy="7.500" r="6.500" fill="#fff" stroke="#333" />
      <path d="M13 12.500l6 6" stroke="#111" strokeWidth="3" />
      <path d="M12 12l2 2" stroke="#d8d020" strokeWidth="2" />
      {inner}
    </svg>
  );
  return (
    <div className="flex h-[34px] items-center bg-[#f0f0f0] pb-1 pl-[10px] text-[14px]">
      <svg width="19" height="19" viewBox="0 0 19 19">
        <path d="M1 1h9v7H1z" fill="#19d219" stroke="#222" /><path d="M9 7h8v7H9z" fill="#19f219" stroke="#222" />
        <path d="M0 10h9M12 3h4v4M7 17h12M3 12v4h4" fill="none" stroke="#444" strokeWidth="1.500" />
      </svg>
      <svg className="ml-[10px]" width="17" height="18" viewBox="0 0 17 18"><path d="M.5.500h16v17H.5z" fill="#77771a" stroke="#111" /><path d="M4 1h9v8H4z" fill="#f0f0f0" /><path d="M4 12h9v5H4z" fill="#111" /><path d="M10 13h2v4h-2z" fill="#eee" /></svg>
      <svg className="ml-[11px]" width="20" height="18" viewBox="0 0 20 18"><path d="M1 3h16v14H1z" fill="#fff" stroke="#222" /><path d="M4 10h9M4 12.500h9M4 15h9" stroke="#2020a0" /><path d="M3 8l7-6 4 5M12 3h5" fill="none" stroke="#444" strokeWidth="1.500" /><path d="M16 0h4v6h-4z" fill="#1414a0" /></svg>
      <svg className="ml-[9px]" width="18" height="19" viewBox="0 0 18 19"><path d="M1 1h11l5 5v12H1z" fill="#fff" stroke="#111" strokeWidth="1.500" /><path d="M12 1v5h5" fill="none" stroke="#111" /><path d="M8 4h3v2H8zM6 8h5v7h2v1.500H6V15h2v-5H6z" fill="#1414a0" /></svg>
      <span className="ml-[9px] h-[22px] w-px bg-[#a0a0a0]" />
      <svg className="ml-[15px]" width="10" height="17" viewBox="0 0 10 17"><path d="M.5.500h3v16h-3zM6.500.500h3v16h-3z" fill="#c01414" stroke="#500" /></svg>
      <svg className="ml-[14px]" width="20" height="18" viewBox="0 0 20 18">
        <path d="M5 7C5 3 9 1 14 4" fill="none" stroke="#0c8a1c" strokeWidth="3" /><path d="M0 6.500h10l-5 5.500z" fill="#0c8a1c" />
        <path d="M15 11c0 4-4 6-9 3" fill="none" stroke="#111" strokeWidth="3" /><path d="M20 11.500H10L15 6z" fill="#111" />
      </svg>
      {sep}
      <svg className="ml-px" width="20" height="14" viewBox="0 0 20 14"><path d="M1 6l4-4h6l-4 5v5H1zM7 6l4-5h5l3 3v5l-5 4H7z" fill="#fff" stroke="#222" /><path d="M3 9h3M9 8h4M14 4l3 1M9 11h4M5 4h3" stroke="#222" /></svg>
      <svg className="ml-[10px]" width="20" height="18" viewBox="0 0 20 18">
        <path d="M0 4c3-3 5-1 7 0M0 8c3-3 5-1 7 0M0 12c3-3 5-1 7 0M0 16c3-3 5-1 7 0" stroke="#c01414" strokeWidth="1.500" fill="none" />
        <path d="M5 3c5-4 8-3 14-1v15c-6-3-9-3-14 0z" fill="#111" />
        <path d="M7 4c2-1.500 3-2 5-2v6c-2 0-3 0-5 1z" fill="#d02020" /><path d="M13 2.500l4.500 1V9L13 8z" fill="#1a9a2a" /><path d="M7 10c2-1 3-1 5-1v5.500c-2 0-3 0-5 1z" fill="#2040d0" /><path d="M13 9l4.500 1v5.500L13 14.500z" fill="#e0c820" />
      </svg>
      <span className="ml-[7px] text-[#1414a0]">Ctrl</span>
      <span className="ml-[9px] text-[#0c8a1c]">Alt</span>
      {sep}
      <svg className="ml-px" width="20" height="19" viewBox="0 0 20 19"><path d="M.5.500h8l3 3v10H.5z" fill="#fff" stroke="#111" /><path d="M7.500 5.500h8l4 4v9h-12z" fill="#fff" stroke="#1414a0" /><path d="M2 5h6M2 8h5M9 11h8M9 13.500h8M9 16h6" stroke="#444" /></svg>
      {sep}
      <span className="w-px" />
      {lens(<path d="M5 7.500h6M8 4.500v6" stroke="#b01414" strokeWidth="1.500" />)}
      {lens(<path d="M5 7.500h6" stroke="#b01414" strokeWidth="1.500" />)}
      {lens(<path d="M4 5v5M6 5h2v5H6zM10 5h2v5h-2z" stroke="#b01414" fill="none" />)}
      {lens(<path d="M5 11l3-7 3 7M6 9h4" stroke="#b01414" strokeWidth="1.300" fill="none" />)}
      <span className="mr-[9px] h-[22px] w-px bg-[#a0a0a0]" />
      <svg width="19" height="19" viewBox="0 0 19 19"><path d="M1 1h17v17H1z" fill="#fff" stroke="#1414a0" strokeWidth="1.500" /><path d="M9.500 2l3 4h-6zM9.500 17l3-4h-6zM2 9.500l4-3v6zM17 9.500l-4-3v6z" fill="#b01414" /><path d="M1 9h2M16 9h2M9 1v2M9 16v2" stroke="#1414a0" /></svg>
    </div>
  );
}

function RemoteTitle() {
  return (
    <div className="flex h-[21px] items-center overflow-hidden border-t-2 border-[#5b5e62] bg-[linear-gradient(90deg,#6c6f73_0%,#a2a6aa_8%,#777b7f_22%,#85898c_40%,#5f6468_60%,#14191d_66%,#0b0f12_84%,#2a3036_90%,#3b4249_100%)] text-[11px] text-black">
      <HsLogo size={14} color="#cc1f5a" />
      <span className="ml-[5px] whitespace-nowrap rounded-lg bg-white/25 pr-1 leading-4">
        HS Manufacture Execution System [COUNTRY: POL] [LINE_TYPE: ] [Ver :2015020203] [DB: std_lcm,HSMA] - [Sky CV Input (w_ma_sky_cv)]
      </span>
      <div className="ml-auto flex h-full pb-[3px] text-white">
        <span className="flex w-[26px] items-center justify-center rounded-bl-md border border-t-0 border-[#9aa] bg-[#555b61]"><span className="mt-1 h-1 w-[10px] bg-white" /></span>
        <span className="flex w-6 items-center justify-center border-b border-r border-[#9aa] bg-[#555b61]">
          <svg width="10" height="10" viewBox="0 0 10 10"><path d="M3 1h6v6M1 3h6v6H1z" fill="none" stroke="#fff" strokeWidth="1.500" /></svg>
        </span>
        <span className="mr-1 flex w-[43px] items-center justify-center rounded-br-md border-b border-r border-[#9aa] bg-[linear-gradient(#d9796a,#b5301a_50%,#c9482c)]">
          <svg width="9" height="9" viewBox="0 0 9 9"><path d="M1 0l7 9M8 0L1 9" stroke="#fff" strokeWidth="2.500" /></svg>
        </span>
      </div>
    </div>
  );
}

const appMenu = ["System", "Basic Information", "Operation Manager", "Pakowanie/Dostawa", "Query/Print", "Material", "IQC", "OQC", "HR", "GEMS", "Machine Check", "Window", "Pomoc"];

const field = "h-6 border border-[#333] bg-white px-px leading-[22px] text-[#222]";
const fieldLabel = "whitespace-nowrap text-right text-[17px] font-bold leading-[26px] " + WIDE;

function OrderPanel() {
  return (
    <div className="ml-[3px] mr-[24px] flex h-[130px] border border-[#bdbdbd] pt-[13px] text-[17px]">
      <div className="flex w-[579px] flex-col">
        <div className="flex h-[35px] items-start">
          <label htmlFor="wo" className={"w-[93px] pr-1 " + fieldLabel}>W/O No</label>
          <input id="wo" className={"w-[158px] " + field} defaultValue="HS_9LMGL08F_1" />
          <label htmlFor="qty" className={"w-[152px] pr-[5px] " + fieldLabel}>W/O Quantity</label>
          <input id="qty" className={"w-[101px] text-center " + field} defaultValue="3 083" />
          <span className="ml-[3px] leading-[26px]">Ea</span>
        </div>
        <div className="flex h-9 items-start">
          <label htmlFor="pno" className={"w-[93px] pr-[5px] " + fieldLabel}>P/No</label>
          <input id="pno" className={"w-[158px] " + field} defaultValue="MC43010054G" />
          <label htmlFor="cpno" className={"w-[152px] pr-[5px] " + fieldLabel}>Customer P/No</label>
          <input id="cpno" className={"w-[157px] " + field} defaultValue="EAJ63952702" />
        </div>
        <div className="flex items-start">
          <label htmlFor="model" className={"w-[93px] pr-[5px] " + fieldLabel}>Model</label>
          <input id="model" className={"w-[208px] " + field} defaultValue="HC430DGG-ABTL1-A11X" />
          <input aria-label="Model description" className={"ml-[5px] w-[255px] " + field} defaultValue="ASS'Y, LCM PACKING" />
        </div>
      </div>
      <div className="flex flex-col">
        <div className="flex h-[38px] items-start">
          <label htmlFor="ptype" className={"w-[117px] pr-[3px] " + fieldLabel}>Prod_Type</label>
          <input id="ptype" className={"w-[160px] text-[16px] font-bold " + WIDE + " " + field} defaultValue="Production" />
        </div>
        <div className="flex items-start">
          <label htmlFor="itype" className={"w-[118px] pr-1 " + fieldLabel}>Item Type</label>
          <div className="flex h-[50px] w-[311px] border border-b-2 border-r-2 border-[#555]">
            <select id="itype" className={"min-w-0 flex-1 appearance-none pb-[2px] pl-[2px] text-[32px] font-bold leading-10 " + WIDE}>
              <option>Case Top</option>
            </select>
            <span className="flex w-[15px] items-center justify-center bg-[#f0f0f0]">
              <svg width="7" height="4" viewBox="0 0 7 4"><path d="M0 0h7L3.500 4z" fill="#111" /></svg>
            </span>
          </div>
        </div>
      </div>
    </div>
  );
}

function Quantity({ label, value }: { label: string; value: string }) {
  return (
    <div className="mb-[2px] w-[311px]">
      <div className="h-[26px] border-b-2 border-r-2 border-t border-b-[#555] border-r-[#888] border-t-[#ddd] bg-[#f0f0f0] text-center text-[17px] leading-6">{label}</div>
      <div className="flex h-[95px] items-center justify-center border border-t-0 border-[#222] pt-1 text-[77px] font-bold leading-none">{value}</div>
    </div>
  );
}

function RemoteApp() {
  const legend = "ml-[3px] px-[3px] text-[15px] font-bold leading-[18px]";
  const stat = "h-[19px] overflow-hidden whitespace-nowrap border-2 border-[#c4c4c4] bg-[#fdfdfd] text-[11px] font-bold leading-[15px]";
  return (
    <div className={"bg-[#fdfdfd] text-black " + TAHOMA}>
      <div className="flex h-[43px] items-start justify-end pr-[5px] pt-[5px]">
        <button className="h-8 w-[47px] border-b-2 border-r-2 border-[#888] bg-[#f0f0f0] text-[11px]">reLogin</button>
        <button className="ml-1 flex h-8 w-[90px] items-center gap-[14px] rounded-sm border-2 border-[#b5aaaa] bg-[#f3e6e6] pl-[9px] text-[12px]">
          <svg width="17" height="17" viewBox="0 0 17 17"><path d="M6 1h10v14H6z" fill="#8a6a3a" /><path d="M9 2l6-1v16l-6-2z" fill="#c9a45a" /><path d="M0 9l6-5v3h4v5H6v3z" fill="#3fb52a" /></svg>
          Exit
        </button>
        <div className="ml-[56px] mt-[5px] w-[114px] whitespace-nowrap text-center text-[13px] font-bold leading-5 font-['DejaVu_Sans_Condensed','Noto_Sans_CJK_KR',sans-serif]">11.08 금요일 13:19</div>
        <div className="ml-[41px] flex h-8 w-[141px] items-center border-2 border-[#888] bg-white pl-[2px] text-[#777]">
          <HsLogo size={26} color="#cf1062" />
          <div className="ml-1 flex flex-col whitespace-nowrap font-['Noto_Sans_CJK_KR',sans-serif]">
            <b className="text-[14px] leading-[15px]">의성전자주식회사</b>
            <span className={"text-[8px] leading-[9px] text-[#999] " + ARIAL}>HEESUNG ELECTRON LTD.</span>
          </div>
        </div>
      </div>
      <div className="mx-px h-[671px] border-2 border-b-0 border-[#999] pt-2">
        <div className="flex h-[52px] items-start pl-[7px]">
          <div className={"h-[35px] w-[360px] bg-[linear-gradient(90deg,#a84e4e,#dd6f9b)] text-center text-[16px] font-bold leading-[35px] text-white " + WIDE}>Sky CV Input</div>
          <div className={"ml-[37px] flex h-9 w-[287px] border-2 border-[#444] text-center text-[23px] font-bold leading-8 " + WIDE}>
            <div className="w-[105px] border-r-2 border-[#444]">Line</div>
            <div className="flex-1 text-[#0000f5]">BM01</div>
          </div>
          <div className="ml-[11px] mt-px h-9 w-[348px] border-b-2 border-r-2 border-[#777] bg-[#f0f0f0] p-[2px]">
            <button className="h-full w-full border border-dashed border-[#555] text-[16px] font-bold">W/O Select</button>
          </div>
        </div>
        <OrderPanel />
        <div className="flex h-[419px] pl-1 pt-[6px]">
          <div className="flex w-[536px] flex-col">
            <fieldset className="h-[128px] border-2 border-[#d0d0d0]">
              <legend className={legend}>Scan Informations</legend>
              <div className="ml-2 mt-[6px] h-[91px] w-[518px] border-l-2 border-t-2 border-[#888] pl-[2px] pt-[2px]">
                <div className="h-[30px] w-[184px] border border-[#444] bg-[#808080] text-center text-[22px] font-bold leading-[29px] text-white">Barcode</div>
                <div className="mt-px h-[52px] w-[502px] border-l border-t-2 border-[#888] bg-[#a6caf0] pt-px text-center text-[25px] font-bold leading-[30px]">LC43A220032L</div>
              </div>
            </fieldset>
            <fieldset className="mt-[5px] h-[280px] border-2 border-[#d0d0d0]">
              <legend className={legend}>Status</legend>
              <div className={"ml-[10px] mt-[3px] flex h-[236px] w-[513px] items-center justify-center overflow-hidden bg-[#008000] pb-[18px] text-[199px] font-bold leading-none text-white " + UI}>
                Run
              </div>
            </fieldset>
          </div>
          <fieldset className="ml-1 h-[413px] w-[507px] border-2 border-[#d0d0d0] pl-[16px]">
            <legend className="-ml-[12px] px-[3px] text-[15px] font-bold leading-[18px]">Today Input Qty</legend>
            <div className="pt-[6px]">
              <Quantity label="Plan Qty" value="3083" />
              <Quantity label="Input Qty" value="0" />
              <Quantity label="Remain Qty" value="3083" />
            </div>
          </fieldset>
        </div>
        <div className="ml-[5px] mt-[11px] h-[33px] w-[1053px] border-b border-l-2 border-r border-t-2 border-b-[#e5e5e5] border-l-[#999] border-r-[#e5e5e5] border-t-[#999] text-[25px] font-bold leading-[33px] text-[#0000f5]">
          Run!
        </div>
      </div>
      <div className="flex h-5 gap-px bg-[#f0f0f0] pl-px pt-px">
        <div className={"w-[52px] " + stat}><span className="text-[9px]">Wiadomoś</span></div>
        <div className={"w-[405px] " + stat} />
        <div className={"w-[41px] text-center " + stat}><span className="text-[10px]">User</span></div>
        <div className={"w-[168px] pl-1 " + stat}>ADMIN_M [KOR]</div>
        <div className={"w-[134px] pl-[2px] " + stat}>☎ IT ROOM (1050)</div>
        <div className={"flex-1 " + stat} />
      </div>
    </div>
  );
}

function RemoteTaskbar() {
  return (
    <div className="flex h-[38px] items-center border-t-2 border-[#49525a] bg-[linear-gradient(100deg,#05080c_0%,#0d1217_35%,#1a2026_44%,#0a0e13_52%,#060a0e_60%,#171d23_64%,#05080c_70%,#05080c_100%)] pb-px pl-[7px] text-[11px] text-white">
      <svg width="35" height="35" viewBox="0 0 36 36">
        <defs><radialGradient id="orb" cx=".5" cy=".9" r=".9"><stop offset="0" stopColor="#4fd0f5" /><stop offset=".6" stopColor="#1e5f98" /><stop offset="1" stopColor="#9db8cc" /></radialGradient></defs>
        <circle cx="18" cy="18" r="17" fill="url(#orb)" stroke="#34516a" />
        <path d="M10 10c3-2 5-1 7 0l-1 7c-3-1-5-1-8 0z" fill="#e8612c" />
        <path d="M19 10c3 2 5 1 8 0l-2 7c-3 1-5 1-8 0z" fill="#8cc63f" />
        <path d="M8 19c3-2 5-1 8 0l-2 7c-3-1-5-1-7 0z" fill="#3a9be8" />
        <path d="M17 19c3 1 5 1 8 0l-2 7c-3 1-5 1-8 0z" fill="#fbd02c" />
      </svg>
      <svg className="ml-[25px]" width="30" height="30" viewBox="0 0 30 30">
        <path d="M9 17h17c0-7-4-11-9-11S7 10 7 16s4 10 10 10c4 0 7-2 9-5h-6c-3 3-8 1-8-3zm3-3c0-5 8-5 8 0z" fill="#2f8fe6" fillRule="evenodd" />
        <path d="M29 1c-6-2-16 5-21 12S1 28 4 29s6-2 8-4C7 28 4 26 8 18S21 4 26 4c2 0 2 2 1 4 2-2 3-6 2-7z" fill="#f5b82e" />
      </svg>
      <svg className="ml-[29px]" width="31" height="29" viewBox="0 0 31 29">
        <path d="M1 3h8l2 2h17v21H1z" fill="#ecd07a" /><path d="M3 1h6v5H3zM12 3h6v4h-6zM21 4h6v4h-6z" fill="#fff" /><path d="M5 2h3v2H5z" fill="#4a4" /><path d="M14 4h3v2h-3z" fill="#c33" />
        <path d="M0 8h31l-2 19H2z" fill="#f5e29a" /><path d="M5 28V18h22v10h-6v-5H11v5z" fill="#8fd0f0" />
      </svg>
      <svg className="ml-[29px]" width="25" height="25" viewBox="0 0 25 25"><path d="M5 0h20v25H5z" fill="#5ea3d0" /><path d="M0 2h20v22H0z" fill="#a8d4ec" /><circle cx="10" cy="12.500" r="8.500" fill="#f07a1c" /><path d="M7 7l8 5.500L7 18z" fill="#fff" /></svg>
      <div className="ml-[19px] flex h-[35px] w-[55px] items-center justify-center border border-[#ccc] bg-[linear-gradient(135deg,#b8bcc0,#777c81)]">
        <div className="bg-white"><HsLogo size={30} color="#cc1650" /></div>
      </div>
      <div className="ml-auto flex items-center pb-[2px]">
        <span>PL</span>
        <svg className="ml-2" width="14" height="12" viewBox="0 0 14 12"><path d="M0 4h14v8H0z" fill="#ddd" /><path d="M3 4c0-3 8 0 9-4M1 6.500h12M1 9h12" stroke="#888" fill="none" /></svg>
        <svg className="ml-3" width="8" height="5" viewBox="0 0 8 5"><path d="M0 5h8L4 0z" fill="#eee" /></svg>
        <svg className="ml-3" width="15" height="16" viewBox="0 0 15 16"><path d="M1 1v14M2 2h5l1 1h5v6H8L7 8H2z" fill="#fff" stroke="#fff" /><circle cx="10.500" cy="11" r="4.500" fill="#d9382c" /><path d="M9 9.500l3 3M12 9.500l-3 3" stroke="#fff" /></svg>
        <svg className="ml-2" width="15" height="12" viewBox="0 0 15 12"><path d="M1 12v-2M4 12V8M7.500 12V6M10.500 12V4M13.500 12V1" stroke="#ddd" strokeWidth="2" /></svg>
        <svg className="ml-2" width="15" height="16" viewBox="0 0 15 16"><path d="M0 5h3l4-4v13l-4-4H0z" fill="#ddd" /><circle cx="10" cy="11" r="4.500" fill="#d9382c" /><path d="M8.500 9.500l3 3M11.500 9.500l-3 3" stroke="#fff" /></svg>
        <div className="ml-[14px] w-[58px] text-center leading-4">13:19<br />2019-11-08</div>
        <span className="-mb-[2px] ml-[10px] h-[35px] w-3 border border-[#444b52] bg-[linear-gradient(135deg,#3a4148,#05080c)]" />
      </div>
    </div>
  );
}

function VncWindow() {
  return (
    <div className="absolute left-[327px] top-[60px] w-[1082px] border border-[#6a6a6a] bg-white shadow-[0_8px_22px_4px_rgba(0,0,0,0.4)]">
      <div className="flex h-[39px] items-center border-b border-[#a8a8a8] pb-px pl-[10px] pr-6 text-[14px] text-black">
        <VncLogo size={20} />
        <span className="ml-[5px]">hs-komputer - TightVNC Viewer</span>
        <div className="ml-auto flex items-center gap-[46px]">
          <svg width="13" height="13" viewBox="0 0 13 13"><path d="M0 6.500h13" stroke="#000" /></svg>
          <svg width="13" height="13" viewBox="0 0 13 13"><path d="M.5.500h12v12H.5z" fill="none" stroke="#000" /></svg>
          <svg width="13" height="13" viewBox="0 0 13 13"><path d="M.5.500l12 12M12.500.500l-12 12" stroke="#000" /></svg>
        </div>
      </div>
      <VncToolbar />
      <RemoteTitle />
      <nav className="flex h-[19px] items-center gap-[11px] whitespace-nowrap bg-[linear-gradient(#fff,#e6eaf6_50%,#d5dcf0)] pl-[6px] pt-[2px] text-[11px] text-[#111]">
        {appMenu.map((m) => (
          <button key={m}>{m}</button>
        ))}
      </nav>
      <RemoteApp />
      <RemoteTaskbar />
      <svg className="absolute left-[877px] top-[582px]" width="13" height="20" viewBox="0 0 13 20">
        <path d="M1 1v14.500l3.500-3 2.500 6 2.300-1-2.500-5.500H11.500z" fill="#fff" stroke="#555" />
      </svg>
    </div>
  );
}

export default function App() {
  return (
    <main className={"relative flex h-screen flex-col overflow-hidden bg-white " + UI}>
      <TitleBar />
      <RibbonTabs />
      <Ribbon />
      <FormulaBar />
      <SheetArea />
      <SheetTabs />
      <StatusBar />
      <Taskbar />
      <FindDialog />
      <VncWindow />
    </main>
  );
}
